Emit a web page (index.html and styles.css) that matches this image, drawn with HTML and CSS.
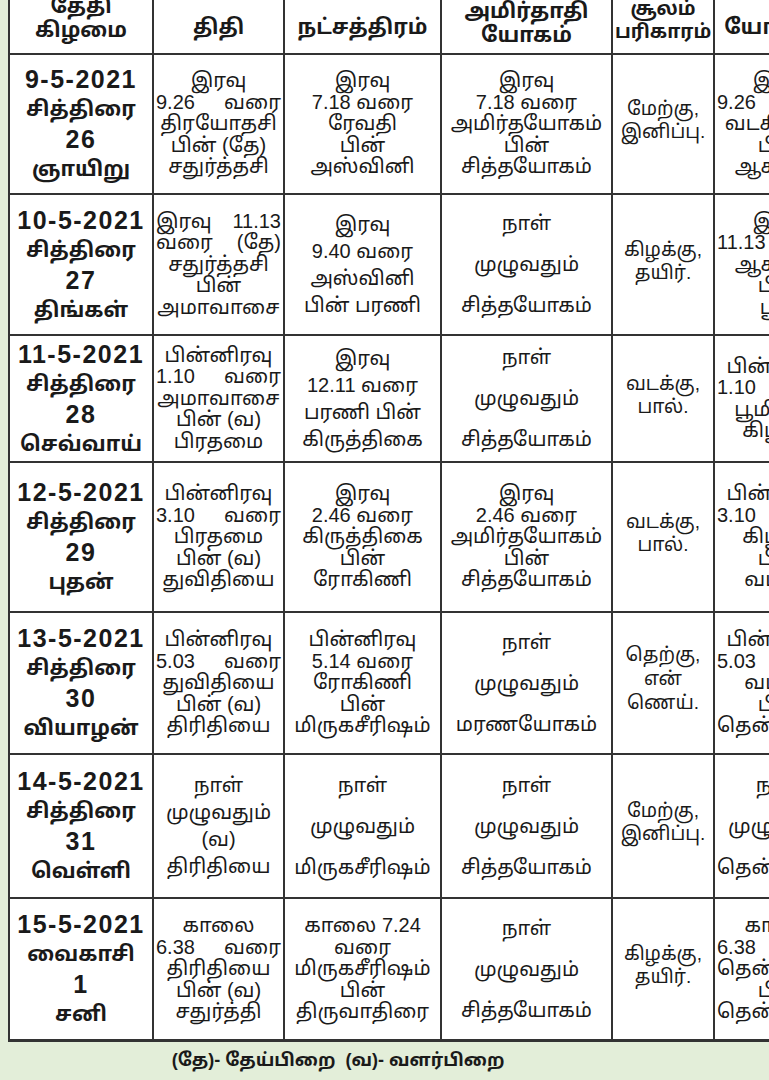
FILE: index.html
```html
<!DOCTYPE html>
<html lang="ta">
<head>
<meta charset="utf-8">
<title>பஞ்சாங்கம்</title>
<link rel="stylesheet" href="styles.css">
</head>
<body>
<div class="page">
<table class="cal">
<colgroup>
<col class="c1"><col class="c2"><col class="c3"><col class="c4"><col class="c5"><col class="c6">
</colgroup>
<thead>
<tr class="hd">
<th><span class="l">தேதி</span><span class="l">கிழமை</span></th>
<th class="one">திதி</th>
<th class="one">நட்சத்திரம்</th>
<th class="am"><span class="l">அமிர்தாதி</span><span class="l">யோகம்</span></th>
<th class="sm"><span class="l">சூலம்</span><span class="l">பரிகாரம்</span></th>
<th class="one">யோகினி</th>
</tr>
</thead>
<tbody>
<tr class="r1">
<td class="d"><span class="l n">9-5-2021</span><span class="l">சித்திரை</span><span class="l n">26</span><span class="l">ஞாயிறு</span></td>
<td><span class="l">இரவு</span><span class="l j">9.26 வரை</span><span class="l">திரயோதசி</span><span class="l">பின் (தே)</span><span class="l">சதுர்த்தசி</span></td>
<td><span class="l">இரவு</span><span class="l">7.18 வரை</span><span class="l">ரேவதி</span><span class="l">பின்</span><span class="l">அஸ்வினி</span></td>
<td><span class="l">இரவு</span><span class="l">7.18 வரை</span><span class="l">அமிர்தயோகம்</span><span class="l">பின்</span><span class="l">சித்தயோகம்</span></td>
<td class="s"><span class="l">மேற்கு,</span><span class="l">இனிப்பு.</span></td>
<td class="y"><span class="l">இரவு</span><span class="l j">9.26 வரை</span><span class="l">வடகிழக்கு</span><span class="l">பின்</span><span class="l">ஆகாயம்</span></td>
</tr>
<tr class="r2">
<td class="d"><span class="l n">10-5-2021</span><span class="l">சித்திரை</span><span class="l n">27</span><span class="l">திங்கள்</span></td>
<td><span class="l j">இரவு 11.13</span><span class="l j">வரை (தே)</span><span class="l">சதுர்த்தசி</span><span class="l">பின்</span><span class="l">அமாவாசை</span></td>
<td class="w4"><span class="l">இரவு</span><span class="l">9.40 வரை</span><span class="l">அஸ்வினி</span><span class="l">பின் பரணி</span></td>
<td class="w3"><span class="l">நாள்</span><span class="l">முழுவதும்</span><span class="l">சித்தயோகம்</span></td>
<td class="s"><span class="l">கிழக்கு,</span><span class="l">தயிர்.</span></td>
<td class="y"><span class="l">இரவு</span><span class="l j">11.13 வரை</span><span class="l">ஆகாயம்</span><span class="l">பின்</span><span class="l">பூமி</span></td>
</tr>
<tr class="r3">
<td class="d"><span class="l n">11-5-2021</span><span class="l">சித்திரை</span><span class="l n">28</span><span class="l">செவ்வாய்</span></td>
<td><span class="l">பின்னிரவு</span><span class="l j">1.10 வரை</span><span class="l">அமாவாசை</span><span class="l">பின் (வ)</span><span class="l">பிரதமை</span></td>
<td class="w4"><span class="l">இரவு</span><span class="l">12.11 வரை</span><span class="l">பரணி பின்</span><span class="l">கிருத்திகை</span></td>
<td class="w3"><span class="l">நாள்</span><span class="l">முழுவதும்</span><span class="l">சித்தயோகம்</span></td>
<td class="s"><span class="l">வடக்கு,</span><span class="l">பால்.</span></td>
<td class="y"><span class="l">பின்னிரவு</span><span class="l j">1.10 வரை</span><span class="l">பூமி பின்</span><span class="l">கிழக்கு</span></td>
</tr>
<tr class="r4">
<td class="d"><span class="l n">12-5-2021</span><span class="l">சித்திரை</span><span class="l n">29</span><span class="l">புதன்</span></td>
<td><span class="l">பின்னிரவு</span><span class="l j">3.10 வரை</span><span class="l">பிரதமை</span><span class="l">பின் (வ)</span><span class="l">துவிதியை</span></td>
<td><span class="l">இரவு</span><span class="l">2.46 வரை</span><span class="l">கிருத்திகை</span><span class="l">பின்</span><span class="l">ரோகிணி</span></td>
<td><span class="l">இரவு</span><span class="l">2.46 வரை</span><span class="l">அமிர்தயோகம்</span><span class="l">பின்</span><span class="l">சித்தயோகம்</span></td>
<td class="s"><span class="l">வடக்கு,</span><span class="l">பால்.</span></td>
<td class="y"><span class="l">பின்னிரவு</span><span class="l j">3.10 வரை</span><span class="l">கிழக்கு</span><span class="l">பின்</span><span class="l">வடக்கு</span></td>
</tr>
<tr class="r5">
<td class="d"><span class="l n">13-5-2021</span><span class="l">சித்திரை</span><span class="l n">30</span><span class="l">வியாழன்</span></td>
<td><span class="l">பின்னிரவு</span><span class="l j">5.03 வரை</span><span class="l">துவிதியை</span><span class="l">பின் (வ)</span><span class="l">திரிதியை</span></td>
<td><span class="l">பின்னிரவு</span><span class="l">5.14 வரை</span><span class="l">ரோகிணி</span><span class="l">பின்</span><span class="l">மிருகசீரிஷம்</span></td>
<td class="w3"><span class="l">நாள்</span><span class="l">முழுவதும்</span><span class="l">மரணயோகம்</span></td>
<td class="s t3"><span class="l">தெற்கு,</span><span class="l">என்</span><span class="l">ணெய்.</span></td>
<td class="y"><span class="l">பின்னிரவு</span><span class="l j">5.03 வரை</span><span class="l">வடக்கு</span><span class="l">பின்</span><span class="l">தென்கிழக்கு</span></td>
</tr>
<tr class="r6">
<td class="d"><span class="l n">14-5-2021</span><span class="l">சித்திரை</span><span class="l n">31</span><span class="l">வெள்ளி</span></td>
<td class="w4"><span class="l">நாள்</span><span class="l">முழுவதும்</span><span class="l">(வ)</span><span class="l">திரிதியை</span></td>
<td class="w3"><span class="l">நாள்</span><span class="l">முழுவதும்</span><span class="l">மிருகசீரிஷம்</span></td>
<td class="w3"><span class="l">நாள்</span><span class="l">முழுவதும்</span><span class="l">சித்தயோகம்</span></td>
<td class="s"><span class="l">மேற்கு,</span><span class="l">இனிப்பு.</span></td>
<td class="y w3"><span class="l">நாள்</span><span class="l">முழுவதும்</span><span class="l">தென்கிழக்கு</span></td>
</tr>
<tr class="r7">
<td class="d"><span class="l n">15-5-2021</span><span class="l">வைகாசி</span><span class="l n">1</span><span class="l">சனி</span></td>
<td><span class="l">காலை</span><span class="l j">6.38 வரை</span><span class="l">திரிதியை</span><span class="l">பின் (வ)</span><span class="l">சதுர்த்தி</span></td>
<td><span class="l">காலை 7.24</span><span class="l">வரை</span><span class="l">மிருகசீரிஷம்</span><span class="l">பின்</span><span class="l">திருவாதிரை</span></td>
<td class="w3"><span class="l">நாள்</span><span class="l">முழுவதும்</span><span class="l">சித்தயோகம்</span></td>
<td class="s"><span class="l">கிழக்கு,</span><span class="l">தயிர்.</span></td>
<td class="y"><span class="l">காலை</span><span class="l j">6.38 வரை</span><span class="l">தென்கிழக்கு</span><span class="l">பின்</span><span class="l">தென்மேற்கு</span></td>
</tr>
</tbody>
</table>
<p class="note">(தே)- தேய்பிறை &nbsp;(வ)- வளர்பிறை</p>
</div>
</body>
</html>
```

FILE: styles.css
```css
html, body {
  margin: 0;
  padding: 0;
  overflow: hidden;
  background: #e3eed9;
}
.page {
  width: 900px;
  padding-left: 8px;
  font-family: "Liberation Sans", "Noto Sans Tamil", "Lohit Tamil", "Noto Sans", sans-serif;
  color: #1a1a1a;
}
.cal {
  border-collapse: collapse;
  table-layout: fixed;
  width: 838px;
  margin-top: -20px;
  background: #fff;
}
.c1 { width: 144px; }
.c2 { width: 131px; }
.c3 { width: 157px; }
.c4 { width: 171px; }
.c5 { width: 102px; }
.c6 { width: 133px; }
.cal th, .cal td {
  border: 2px solid #333;
  padding: 0 2px;
  text-align: center;
  vertical-align: middle;
  overflow: hidden;
}
.cal th {
  height: 71px;
  font-size: 21px;
  font-weight: bold;
  line-height: 24px;
  padding-top: 0;
}
.cal th.one { padding-top: 18px; height: 53px; }
.cal th.am { padding-top: 10px; height: 61px; }
.cal th.sm { font-size: 19px; line-height: 23px; padding-top: 4px; height: 67px; }
.l { display: block; white-space: nowrap; }
.cal td {
  font-size: 20px;
  line-height: 21.5px;
}
.cal td.d {
  font-size: 21px;
  font-weight: bold;
  line-height: 30px;
}
.cal td.d .n { font-size: 25px; letter-spacing: 1.5px; }
.cal td.s { font-size: 19px; line-height: 23px; padding-bottom: 8px; }
.cal td.w3 .l { line-height: 41px; }
.cal td.t3 .l { line-height: 24px; }
.cal td.w4 .l { line-height: 27px; }
.j { text-align: justify; text-align-last: justify; }
.r1 td { height: 138px; }
.r2 td { height: 139px; }
.r3 td { height: 125px; }
.r4 td { height: 148px; }
.r5 td { height: 140px; }
.r6 td { height: 142px; }
.r7 td { height: 140px; }
.cal td.s { height: auto; }
.cal tr.r7 td { border-bottom-width: 3px; }
.note {
  width: 660px;
  margin: 8px 0 0 0;
  text-align: center;
  font-size: 18px;
  font-weight: bold;
}
```
